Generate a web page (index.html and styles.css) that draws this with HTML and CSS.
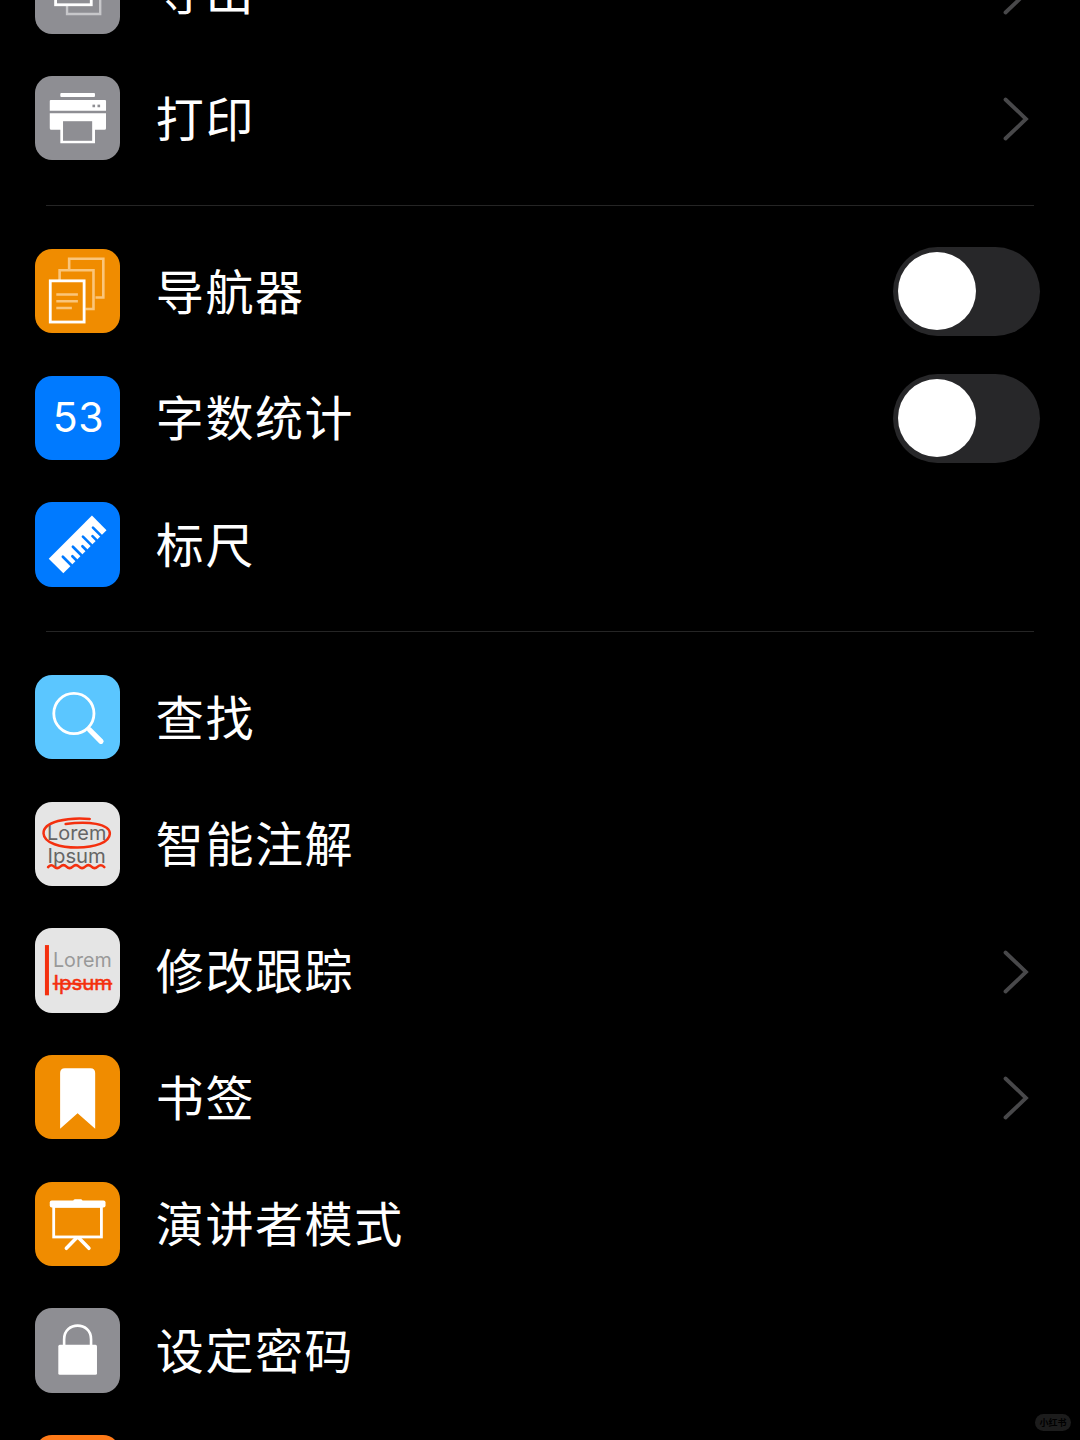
FILE: index.html
```
<!DOCTYPE html>
<html lang="zh-CN">
<head>
  <meta charset="UTF-8">
  <meta name="viewport" content="width=device-width, initial-scale=1.0">
  <title>文稿选项</title>
  <link rel="stylesheet" href="styles.css">
</head>
<body>

<div class="menu">
  <!-- 导出和打印 -->
  <div class="row">
    <svg class="icon gray" viewBox="-0.2 0 84 84">
      <path d="M31.700 56V64.700H64.700V28H56" fill="none" stroke="#c7c7ca" stroke-width="2.400"/>
      <rect x="20.300" y="14" width="35.500" height="41.500" fill="#8e8e93" stroke="#fff" stroke-width="2.800"/>
    </svg>
    <span class="label">导出</span>
    <svg class="arrow" viewBox="0 0 26 44"><path d="M2.500 2.500L23 22L2.500 41.500"/></svg>
  </div>
  <div class="row">
    <svg class="icon gray" viewBox="-0.2 0 84 84">
      <rect x="25" y="17" width="34.500" height="4" rx="1" fill="#fff"/>
      <path d="M15.500 24H69.500Q70.500 24 70.500 25V34.500H14.500V25Q14.500 24 15.500 24Z" fill="#fff"/>
      <path d="M14.500 37H70.500V52Q70.500 53.500 69 53.500H59.500V67H25V53.500H16Q14.500 53.500 14.500 52Z" fill="#fff"/>
      <rect x="27.700" y="45" width="29" height="19.500" fill="#8e8e93"/>
      <rect x="57" y="28.500" width="2.600" height="2.600" fill="#8e8e93"/>
      <rect x="62" y="28.500" width="2.600" height="2.600" fill="#8e8e93"/>
    </svg>
    <span class="label">打印</span>
    <svg class="arrow" viewBox="0 0 26 44"><path d="M2.500 2.500L23 22L2.500 41.500"/></svg>
  </div>

  <div class="line"></div>

  <!-- 显示选项 -->
  <div class="row">
    <svg class="icon orange" viewBox="-0.2 0 84 84">
      <path d="M33.800 21V9.700H67.800V48.300H60" fill="none" stroke="#fac57a" stroke-width="2.600"/>
      <path d="M24.300 31V21.200H58V59.700H50" fill="none" stroke="#fac57a" stroke-width="2.600"/>
      <rect x="15" y="31.700" width="33.700" height="41" fill="none" stroke="#fff" stroke-width="2.800"/>
      <path d="M21 45.300H42.500M21 52H42.500M21 58.700H36.500" stroke="#fac57a" stroke-width="2.400"/>
    </svg>
    <span class="label">导航器</span>
    <div class="switch"></div>
  </div>
  <div class="row">
    <div class="icon blue number">53</div>
    <span class="label">字数统计</span>
    <div class="switch"></div>
  </div>
  <div class="row">
    <svg class="icon blue" viewBox="-0.2 0 84 84">
      <path d="M56.500 13.500L71 28L28 71L13.500 56.500Z" fill="#fff"/>
      <path d="M36 63L27.500 54.500M41 58L37 54M46 53L37.500 44.500M51 48L47 44M56 43L47.500 34.500M61 38L57 34M65.500 33.500L57.500 25.500" stroke="#007aff" stroke-width="2.600" stroke-linecap="round"/>
    </svg>
    <span class="label">标尺</span>
  </div>

  <div class="line"></div>

  <!-- 工具 -->
  <div class="row">
    <svg class="icon sky" viewBox="-0.2 0 84 84">
      <circle cx="38.500" cy="38.300" r="20" fill="none" stroke="#fff" stroke-width="2.800"/>
      <path d="M54 54.500L65.500 66" stroke="#fff" stroke-width="5.200" stroke-linecap="round"/>
      <path d="M52 52L57 57" stroke="#fff" stroke-width="2.500"/>
    </svg>
    <span class="label">查找</span>
  </div>
  <div class="row">
    <svg class="icon light" viewBox="0 0.700 84 84">
      <g class="lorem" fill="#666">
        <text x="12" y="38.500" textLength="59" lengthAdjust="spacingAndGlyphs">Lorem</text>
        <text x="12.500" y="61" textLength="58" lengthAdjust="spacingAndGlyphs">Ipsum</text>
      </g>
      <g fill="none" stroke="#f4300f" stroke-width="2.500" stroke-linecap="round">
        <path d="M54.500 17.500C32 15.500 8 20.500 8.500 32C9 42 26 46 42 46C60 46 74 41 74.500 32.500C75 22 52 19.500 30.500 22.700"/>
        <path d="M13 65.500Q16 62 19 65T25.200 65T31.400 65T37.600 65T43.800 65T50 65T56.200 65T62.400 65T69 65.500"/>
      </g>
    </svg>
    <span class="label">智能注解</span>
  </div>
  <div class="row">
    <svg class="icon light" viewBox="-0.4 0 84 84">
      <rect x="9.500" y="17" width="4" height="50" fill="#f4300f"/>
      <g class="lorem">
        <text x="17.500" y="39" fill="#999" textLength="58.500" lengthAdjust="spacingAndGlyphs">Lorem</text>
        <text x="18" y="61.500" fill="#f4300f" stroke="#f4300f" stroke-width=".5" textLength="58.500" lengthAdjust="spacingAndGlyphs">Ipsum</text>
      </g>
      <path d="M17 55.500H76.500" stroke="#f4300f" stroke-width="2"/>
    </svg>
    <span class="label">修改跟踪</span>
    <svg class="arrow" viewBox="0 0 26 44"><path d="M2.500 2.500L23 22L2.500 41.500"/></svg>
  </div>
  <div class="row">
    <svg class="icon orange" viewBox="-0.2 0 84 84">
      <path d="M24.800 73.500V18Q24.800 13.300 29.500 13.300H55Q59.700 13.300 59.700 18V73.500L42.200 58Z" fill="#fff"/>
    </svg>
    <span class="label">书签</span>
    <svg class="arrow" viewBox="0 0 26 44"><path d="M2.500 2.500L23 22L2.500 41.500"/></svg>
  </div>
  <div class="row">
    <svg class="icon orange" viewBox="-0.2 0.300 84 84">
      <rect x="38" y="17.500" width="9" height="4" rx="1.500" fill="#fff"/>
      <rect x="14.500" y="18.800" width="55.500" height="7" rx="2" fill="#fff"/>
      <rect x="18.400" y="24.500" width="47.500" height="30.500" fill="none" stroke="#fff" stroke-width="2.800"/>
      <path d="M41 56L31 66.300M43.500 56L53.500 66.300" stroke="#fff" stroke-width="3.500" stroke-linecap="round"/>
    </svg>
    <span class="label">演讲者模式</span>
  </div>
  <div class="row">
    <svg class="icon gray" viewBox="-0.2 0 84 84">
      <path d="M28.800 38V31C28.800 13 55.600 13 55.600 31V38" fill="none" stroke="#fff" stroke-width="2.600"/>
      <rect x="23" y="36.700" width="38.500" height="29.800" rx="1.500" fill="#fff"/>
    </svg>
    <span class="label">设定密码</span>
  </div>
  <div class="row">
    <div class="icon deep"></div>
  </div>
</div>

<div class="watermark">小红书</div>

</body>
</html>
```
FILE: styles.css
```
body {
  margin: 0;
  height: 1440px;
  overflow: hidden;
  background-color: #000;
  color: #fff;
  font-family: "Noto Sans CJK SC", sans-serif;
  position: relative;
}
/* 列表已滚动，第一行只露出下半部分 */
.menu {
  box-sizing: border-box;
  display: flow-root;
  height: 1512px;
  margin-top: -71.800px;
  padding: 0 40px 0 35.400px;
  overflow: hidden;
}
.row {
  display: flex;
  align-items: center;
  height: 126.700px;
}
.icon {
  width: 84.400px;
  height: 84.400px;
  border-radius: 17px;
  flex: none;
}
.gray {
  background-color: #8e8e93;
}
.orange {
  background-color: #f08c00;
}
.blue {
  background-color: #007aff;
}
.sky {
  background-color: #5bc6ff;
}
.light {
  background-color: #e5e5e5;
}
.deep {
  background-color: #ff7a18;
}
.number {
  font-family: Inter, sans-serif;
  font-size: 41px;
  line-height: 82px;
  letter-spacing: 0.500px;
  text-align: center;
  text-indent: 1.500px;
}
.lorem {
  font-family: Inter, sans-serif;
  font-size: 20px;
}
.label {
  margin-left: 36px;
  padding-bottom: 5px;
  font-size: 48px;
  line-height: 70px;
  letter-spacing: 1.600px;
}
.arrow {
  width: 26px;
  height: 44px;
  margin-left: auto;
  margin-right: 11px;
  padding-top: 2px;
  fill: none;
  stroke: #48484a;
  stroke-width: 3.800px;
  stroke-linecap: round;
}
.line {
  height: 1px;
  margin: 23.500px 6px 21.600px 10.600px;
  background-color: #252525;
}
/* 关闭状态的开关 */
.switch {
  box-sizing: border-box;
  width: 147px;
  height: 89px;
  margin-top: 1px;
  margin-left: auto;
  padding: 5.400px;
  border-radius: 45px;
  background-color: #272729;
}
.switch::before {
  content: "";
  display: block;
  width: 78px;
  height: 78px;
  border-radius: 50%;
  background-color: #fff;
}
.watermark {
  position: absolute;
  right: 9px;
  bottom: 9px;
  width: 36px;
  height: 17px;
  border-radius: 9px;
  background-color: #1c1c1c;
  color: #000;
  font-size: 9px;
  font-weight: bold;
  line-height: 17px;
  text-align: center;
}
```
